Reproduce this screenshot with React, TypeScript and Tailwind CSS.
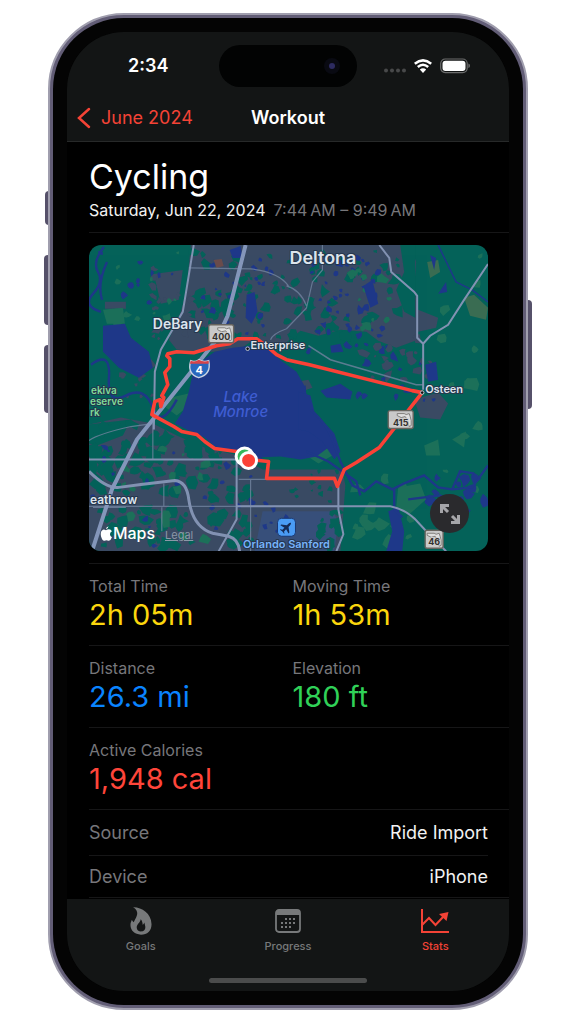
import type { ReactNode } from "react";

type Patch = { x: number; y: number; w: number; h: number; n: number; size: number; color: string; seed: number };

const URBAN = "#3a4a63";
const LAND = "#046259";
const WATER = "#1e3889";
const MEADOW = "#1c7059";

const PATCHES: Patch[] = [
  { x: 190, y: 250, w: 110, h: 88, n: 60, size: 6, color: LAND, seed: 3 },
  { x: 290, y: 250, w: 110, h: 88, n: 40, size: 7, color: LAND, seed: 8 },
  { x: 196, y: 292, w: 36, h: 26, n: 12, size: 8, color: LAND, seed: 17 },
  { x: 190, y: 250, w: 90, h: 86, n: 24, size: 4, color: WATER, seed: 12 },
  { x: 310, y: 250, w: 80, h: 100, n: 46, size: 5, color: WATER, seed: 21 },
  { x: 350, y: 265, w: 45, h: 65, n: 12, size: 7, color: MEADOW, seed: 34 },
  { x: 150, y: 265, w: 40, h: 75, n: 20, size: 5, color: URBAN, seed: 43 },
  { x: 112, y: 345, w: 46, h: 55, n: 12, size: 6, color: URBAN, seed: 55 },
  { x: 92, y: 418, w: 130, h: 40, n: 46, size: 9, color: LAND, seed: 58 },
  { x: 90, y: 455, w: 160, h: 94, n: 105, size: 8, color: LAND, seed: 61 },
  { x: 90, y: 435, w: 200, h: 113, n: 34, size: 4, color: WATER, seed: 77 },
  { x: 120, y: 430, w: 90, h: 110, n: 14, size: 6, color: MEADOW, seed: 81 },
  { x: 290, y: 472, w: 50, h: 34, n: 14, size: 4, color: LAND, seed: 92 },
  { x: 360, y: 335, w: 75, h: 48, n: 20, size: 6, color: URBAN, seed: 104 },
  { x: 290, y: 345, w: 150, h: 58, n: 20, size: 5, color: WATER, seed: 115 },
  { x: 440, y: 255, w: 42, h: 240, n: 12, size: 8, color: MEADOW, seed: 127 },
  { x: 355, y: 475, w: 60, h: 70, n: 18, size: 9, color: MEADOW, seed: 139 },
  { x: 92, y: 250, w: 92, h: 80, n: 12, size: 5, color: MEADOW, seed: 145 },
  { x: 90, y: 250, w: 92, h: 60, n: 10, size: 4, color: WATER, seed: 149 },
  { x: 430, y: 478, w: 55, h: 24, n: 12, size: 7, color: WATER, seed: 159 },
  { x: 320, y: 508, w: 22, h: 42, n: 14, size: 7, color: LAND, seed: 166 },
];

function patchPath(p: Patch): string {
  let s = p.seed * 7919;
  const rnd = () => {
    s = (s * 16807 + 11) % 2147483647;
    return s / 2147483647;
  };
  rnd();
  let d = "";
  for (let i = 0; i < p.n; i++) {
    const cx = p.x + rnd() * p.w;
    const cy = p.y + rnd() * p.h;
    const r = p.size * (0.3 + rnd() * 0.7);
    for (let k = 0; k < 7; k++) {
      const a = (k / 7) * Math.PI * 2;
      const q = r * (0.45 + rnd() * 0.8);
      d += `${k ? "L" : "M"}${(cx + Math.cos(a) * q).toFixed(1)} ${(cy + Math.sin(a) * q).toFixed(1)}`;
    }
    d += "Z";
  }
  return d;
}

function Shield({ x, y, w, label }: { x: number; y: number; w: number; label: string }) {
  return (
    <g>
      <rect x={x} y={y} width={w} height={18} rx={2} fill="#c9c9c9" stroke="#68655f" strokeWidth={1.4} />
      <path
        d={`M${x + w - 16} ${y + 3}h7l2 1 3-1 1 3 1 4v5l-2 1-1-3-1-4-2-3-4 1-4-2z`}
        fill="#dedede"
        stroke="#6f6c68"
        strokeWidth={0.8}
      />
      <text
        x={x + w / 2}
        y={y + 15}
        textAnchor="middle"
        fontSize={9}
        fontWeight={700}
        fill="#33312f"
        stroke="#d0d0d0"
        strokeWidth={1.5}
        paintOrder="stroke"
      >
        {label}
      </text>
    </g>
  );
}

function RouteMap() {
  return (
    <svg
      viewBox="88 245 400 307"
      preserveAspectRatio="xMidYMid slice"
      className="block w-full font-[Inter,sans-serif]"
      role="img"
      aria-label="Route map"
    >
      <rect x="88" y="245" width="400" height="307" fill={LAND} />
      <path
        fill={URBAN}
        d="M190 245H410L416 262 414 288 418 310 438 318 436 328 418 332 415 341 396 348 378 341 366 332 340 330 318 336 300 331 284 344 250 342 236 352 210 352 176 350 168 340 180 312 186 290ZM153 274L182 270 178 300 160 304ZM104 302L125 302 125 309 104 309ZM88 425L120 418 152 424 176 436 204 448 238 456 262 470 342 470 345 486 340 552H88ZM414 400L438 393 448 404 440 420 420 418ZM296 382L308 380 312 388 300 392Z"
      />
      <path fill={LAND} d="M400 245H415V318L404 312 396 290 404 272ZM88 425L130 420 122 436 96 446 88 444Z" />
      <path fill="#37507f" d="M262 512H332L338 522 334 552H254Z" opacity="0.8" />
      {PATCHES.map((p) => (
        <path key={p.seed} d={patchPath(p)} fill={p.color} />
      ))}
      <path fill={MEADOW} d="M102 310L122 308 124 324 106 324ZM170 398L188 394 188 406 176 416 165 408ZM296 436L312 430 328 440 332 456 318 464 300 452ZM398 488L420 484 426 500 408 516 396 508ZM424 446L438 440 440 456 426 456ZM452 440L466 432 464 448Z" />
      <path fill="#3a6c52" d="M427 262L438 260 440 272 430 278ZM464 298L474 295 488 308 486 320 470 316Z" />
      <path fill="#6a4c4c" d="M213 260L221 259 223 266 216 268Z" />
      <g fill={WATER}>
        <path d="M102 326L124 324 130 338 148 352 152 368 138 378 118 368 102 352Z" />
        <path d="M188 392L192 374 200 362 214 352 232 348 250 346 268 350 282 362 296 372 304 386 307 398 312 414 322 424 332 434 328 448 316 457 300 460 280 457 252 458 236 452 214 447 204 438 186 430 174 424 182 412Z" />
        <path d="M298 392L310 396 314 412 334 434 340 452 334 460 322 442 308 432 298 430Z" />
        <path d="M246 295L254 292 257 312 251 324 245 318ZM229 250L240 246 242 258 232 258ZM363 286L372 280 378 304 370 308ZM330 346L340 344 343 352 331 353ZM320 391L340 384 352 392 350 400 326 398ZM430 255L436 258 434 270ZM438 294L446 282 447 292ZM425 365L436 362 438 380 428 382ZM388 512L398 508 404 532 402 552 386 552 392 532Z" />
      </g>
      <g fill="none" stroke={WATER} strokeWidth="2.4">
        <path d="M103 247Q91 262 97 272T92 294 100 312M106 262Q96 284 101 300M90 365Q110 350 108 378T125 396 152 408 176 400" />
        <path d="M310 410Q328 425 334 446L340 462 352 486 364 492 376 482 392 490 404 484 424 476 438 488 452 490 472 488 488 466M306 452L328 462 356 482 360 496M452 490L460 472 474 474M394 490V510L402 518 M408 500L440 496 470 512" />
        <path d="M438 245L456 282 472 290 488 302" strokeWidth="1.5" />
      </g>
      <g fill="none" stroke="#72849f" strokeWidth="1.2" opacity="0.8">
        <path d="M188 268L250 269Q278 272 288 286 M322 245V270L312 282 306 308 286 329 M286 286Q300 290 306 306 M270 340Q272 334 286 329" />
        <path d="M308 346L330 360 416 385H423" strokeWidth="1.5" />
        <path d="M88 507H338 M163 484V507 M238 480H266 M250 480V552 M88 441Q98 434 130 427L152 424V460 M161 508V532 M92 508H125" />
      </g>
      <g fill="none" stroke="#8292b2" strokeWidth="2">
        <path d="M193 245L184 300 182 312 160 350 154 372 153 430" />
        <path d="M379 245L389 258 391 272 414 292 417 296V338L423 344 430 336 448 325 464 300 488 264M423 344V390" />
        <path d="M88 460H239M236 460V520L218 552M237 507H390Q405 510 415 520L428 534 446 552M338 487V510L343 535 336 552" />
        <path d="M88 472Q106 490 118 488L140 485 174 481Q186 482 188 500 192 528 212 534L228 537Q238 540 239 552" strokeWidth="3" />
      </g>
      <path d="M245 245L227 316 216 340 136 440 111 490 91 552" fill="none" stroke="#8496ba" strokeWidth="4" />
      <path
        d="M243 453L214 449 204 442 196 435 181 432 173 427 151 415 154 402 159 400 160 407 163 398 161 396 167 385 164 373 169 367 169 359 166 356 167 354 176 352 193 353 216 346 229 344 237 339H256L268 348 276 355 286 360 309 365 412 391 422 393 379 448 356 463 344 470 337 487 334 479H266L268 462 248 460"
        fill="none"
        stroke="#fb4136"
        strokeWidth="3.600"
        strokeLinejoin="round"
      />
      <circle cx="244" cy="457" r="8.5" fill="#35b85a" stroke="#fff" strokeWidth="3" />
      <circle cx="248" cy="461" r="8" fill="#fb4136" stroke="#fff" strokeWidth="3" />
      <Shield x={208} y={325} w={25} label="400" />
      <Shield x={388} y={411} w={25} label="415" />
      <Shield x={425} y={531} w={18} label="46" />
      <path d="M190 361Q194 363 198 360 203 363 208 361 211 375 198 378 186 374 190 361Z" fill="#2867bd" stroke="#c8d2e2" strokeWidth="1.4" />
      <path d="M190 361Q194 363 198 360 203 363 208 361L208 364H189Z" fill="#d5444a" />
      <text x="198.500" y="374" textAnchor="middle" fontSize="11" fontWeight="700" fill="#fff">4</text>
      <rect x="277" y="519" width="18" height="18" rx="4" fill="#4a9cf5" stroke="#1b376f" strokeWidth="1" />
      <path transform="translate(286 528) rotate(45) scale(0.58)" fill="#152c58" d="M0-11Q2-10 2-6V-3L10 3V5L2 3V8L5 10V11L0 10-5 11V10L-2 8V3L-10 5V3L-2-3V-6Q-2-10 0-11Z" />
      <g fill="#111" stroke="#bbc5cf" strokeWidth="1">
        <circle cx="247" cy="349" r="1.800" />
        <circle cx="422" cy="393" r="1.800" />
      </g>
      <g fill="#dce4ec" stroke="#25364d" strokeWidth="2" paintOrder="stroke" strokeLinejoin="round" fontWeight="600">
        <text x="289" y="264" fontSize="18">Deltona</text>
        <text x="152" y="329" fontSize="14">DeBary</text>
        <text x="250" y="349" fontSize="11">Enterprise</text>
        <text x="425" y="393" fontSize="11">Osteen</text>
        <text x="89" y="505" fontSize="12">eathrow</text>
        <text x="286" y="549" fontSize="11" textAnchor="middle" fill="#78b3fa">Orlando Sanford</text>
        <g fontSize="10" fill="#7fdc98">
          <text x="90" y="394">ekiva</text>
          <text x="89" y="405">eserve</text>
          <text x="89" y="416">rk</text>
        </g>
      </g>
      <g fill="#3f5dd2" fontSize="15" fontWeight="500" fontStyle="italic" textAnchor="middle">
        <text x="240" y="402">Lake</text>
        <text x="240" y="417">Monroe</text>
      </g>
      <path transform="translate(99 527) scale(0.5)" fill="#fff" d="M17 0Q17 4 12 6 12 2 17 0ZM12 8Q15 6 18 6 22 6 24 10 20 12 20 16 20 20 24 22 21 30 17 29 13 27 9 29 5 30 2 20 0 10 6 7 8 6 12 8Z" />
      <text x="112" y="540" fontSize="16" fontWeight="500" fill="#fff">Maps</text>
    </svg>
  );
}

function Stat({ label, value, color }: { label: string; value: string; color: string }) {
  return (
    <div>
      <dt className="text-base leading-5 text-[#77777b]">{label}</dt>
      <dd className={`text-[29px] leading-[38px] ${color}`}>{value}</dd>
    </div>
  );
}

function StatRow({ children }: { children: ReactNode }) {
  return <dl className="grid grid-cols-2 gap-2 border-b border-[#161617] pt-3 pr-[21px] pb-[11px]">{children}</dl>;
}

function FlameIcon() {
  return (
    <svg width="22" height="28" viewBox="6 3 66 85" fill="currentColor" fillRule="evenodd" aria-hidden="true">
      <path d="M15 4C40 3 70 22 71 55C71 75 58 87 39 87C20 87 7 75 7 58C7 50 10 47 11 42C13 46 15 48 17 49C20 42 30 28 27 18C25 11 20 7 15 4ZM38 40C37 50 26 55 26 65C26 73 32 77 39 77C47 77 53 72 52 62C51 57 50 53 49 50C48 54 46 56 44 57C44 50 42 44 38 40Z" />
    </svg>
  );
}

function CalendarIcon() {
  return (
    <svg width="26" height="24" viewBox="0 0 26 24" aria-hidden="true">
      <rect x="1" y="1" width="24" height="22" rx="3" fill="none" stroke="currentColor" strokeWidth="1.800" />
      <path d="M1 6V4Q1 1 4 1H22Q25 1 25 4V6Z" fill="currentColor" />
      <path d="M10 10h10M6 14h14M6 18h10" stroke="currentColor" strokeWidth="2" strokeDasharray="2 2" />
    </svg>
  );
}

function ChartIcon() {
  return (
    <svg width="28" height="25" viewBox="0 0 28 25" fill="none" stroke="currentColor" strokeWidth="2" aria-hidden="true">
      <path d="M1 0V23H28" />
      <path d="M1 16L8 9 14.500 16 23 7" />
      <path d="M18 5L27.500 3 25.500 12Z" fill="currentColor" stroke="none" />
    </svg>
  );
}

function Tab({ label, icon, active }: { label: string; icon: ReactNode; active?: boolean }) {
  return (
    <button
      type="button"
      className={`flex flex-col items-center gap-[3px] text-[11px] leading-4 font-medium ${active ? "text-[#f44336]" : "text-[#77797a]"}`}
    >
      <span className="flex h-7 items-center">{icon}</span>
      {label}
    </button>
  );
}

export default function App() {
  return (
    <div className="flex min-h-screen justify-center bg-white py-[13px] font-[Inter,sans-serif]">
      <div className="relative w-5/6 self-start">
        <i className="absolute top-[178px] -left-[3px] h-[34px] w-1 rounded-l-sm bg-[#56516a]" />
        <i className="absolute top-[242px] -left-1 h-[70px] w-1 rounded-l-sm bg-[#56516a]" />
        <i className="absolute top-[332px] -left-1 h-[68px] w-1 rounded-l-sm bg-[#56516a]" />
        <i className="absolute top-[287px] -right-1 h-[109px] w-1 rounded-r-sm bg-[#56516a]" />
        <div className="relative rounded-[76px] border-2 border-[#a09eae] bg-[#625d76] p-[3px]">
          <div className="rounded-[71px] bg-[#040404] p-[14px]">
            <main className="overflow-hidden rounded-[57px] bg-black text-white">
              <header className="border-b border-[#272929] bg-[#131515] pt-[13px]">
                <div className="grid grid-cols-[1fr_138px_1fr] items-center">
                  <span className="pl-[61px] text-lg font-semibold">2:34</span>
                  <div className="flex h-[42px] items-center justify-end rounded-full bg-[#020303] pr-[17px]">
                    <span className="flex size-4 items-center justify-center rounded-full bg-[#090a12]">
                      <span className="size-1.5 rounded-full bg-[#2d2b60]" />
                    </span>
                  </div>
                  <div className="flex items-center justify-end gap-2 pr-[39px]">
                    <svg width="22" height="16" viewBox="0 0 22 16" fill="#48494a" aria-hidden="true">
                      <circle cx="2" cy="12.500" r="2" />
                      <circle cx="8" cy="12.500" r="2" />
                      <circle cx="14" cy="12.500" r="2" />
                      <circle cx="20" cy="12.500" r="2" />
                    </svg>
                    <svg width="18" height="14" viewBox="0 0 18 14" fill="none" stroke="#fff" strokeWidth="2.500" aria-hidden="true">
                      <path d="M.8 4.800Q9-2 17.200 4.800M3.800 8Q9 3.600 14.200 8" />
                      <path d="M9 14L5.800 10.600Q9 7.800 12.200 10.600Z" fill="#fff" stroke="none" />
                    </svg>
                    <svg width="30" height="16" viewBox="0 0 30 16" aria-hidden="true">
                      <rect x=".7" y="1" width="26.500" height="13.600" rx="4.500" fill="none" stroke="#6c6d6d" strokeWidth="1.200" />
                      <rect x="2.500" y="2.700" width="23" height="10.200" rx="3" fill="#fff" />
                      <path d="M28.400 5.500Q30 6 30 7.800T28.400 10Z" fill="#6c6d6d" />
                    </svg>
                  </div>
                </div>
                <nav className="grid grid-cols-[1fr_auto_1fr] items-center pt-2 pb-px">
                  <button type="button" className="flex h-[45px] items-center gap-[10px] pl-[10px] text-lg text-[#f44336]">
                    <svg width="14" height="22" viewBox="0 0 14 22" fill="none" stroke="currentColor" strokeWidth="2.500" strokeLinecap="round" aria-hidden="true">
                      <path d="M12 2L2 11l10 9" />
                    </svg>
                    June 2024
                  </button>
                  <h2 className="text-lg font-semibold">Workout</h2>
                </nav>
              </header>

              <div className="pl-[22px]">
                <section className="border-b border-[#161617] pt-[14px] pb-[10px]">
                  <h1 className="text-[34px] leading-[42px]">Cycling</h1>
                  <p className="flex gap-2 text-base leading-6 text-[#f2f2f2]">
                    <span>Saturday, Jun 22, 2024</span>
                    <span className="text-[#77777b]">{"7:44\u202FAM – 9:49\u202FAM"}</span>
                  </p>
                </section>
                <section className="border-b border-[#161617] py-3 pr-[21px]">
                  <div className="relative overflow-hidden rounded-xl">
                    <RouteMap />
                    <a href="#legal" className="absolute bottom-2 left-[76px] text-[11px] leading-4 text-[#8b98a8] underline">
                      Legal
                    </a>
                    <button
                      type="button"
                      aria-label="Expand map"
                      className="absolute right-[19px] bottom-[18px] flex size-[39px] items-center justify-center rounded-full bg-[#2a2a2d]"
                    >
                      <svg width="22" height="22" viewBox="0 0 22 22" fill="none" stroke="#a5a5a9" strokeWidth="3" aria-hidden="true">
                        <path d="M2.500 10V2.500H10M3 3L9 9M12 19.500H19.500V12M19 19L13 13" />
                      </svg>
                    </button>
                  </div>
                </section>
                <StatRow>
                  <Stat label="Total Time" value="2h 05m" color="text-[#fbd60d]" />
                  <Stat label="Moving Time" value="1h 53m" color="text-[#fbd60d]" />
                </StatRow>
                <StatRow>
                  <Stat label="Distance" value="26.3 mi" color="text-[#0a84ff]" />
                  <Stat label="Elevation" value="180 ft" color="text-[#30d158]" />
                </StatRow>
                <StatRow>
                  <Stat label="Active Calories" value="1,948 cal" color="text-[#ff453a]" />
                </StatRow>
                <dl className="pr-[21px] text-lg">
                  <div className="flex h-[46px] items-center justify-between border-b border-[#161617]">
                    <dt className="text-[#77777b]">Source</dt>
                    <dd className="text-[#f2f2f2]">Ride Import</dd>
                  </div>
                  <div className="flex h-[41px] items-center justify-between">
                    <dt className="text-[#77777b]">Device</dt>
                    <dd className="text-[#f2f2f2]">iPhone</dd>
                  </div>
                </dl>
                <div className="border-b border-[#161617]" />
              </div>

              <footer className="mt-px bg-[#131515] pb-2">
                <nav className="grid grid-cols-3 pt-2">
                  <Tab label="Goals" icon={<FlameIcon />} />
                  <Tab label="Progress" icon={<CalendarIcon />} />
                  <Tab label="Stats" icon={<ChartIcon />} active />
                </nav>
                <div className="mx-auto mt-6 h-[5px] w-[158px] rounded-full bg-[#4b4c4c]" />
              </footer>
            </main>
          </div>
        </div>
      </div>
    </div>
  );
}
